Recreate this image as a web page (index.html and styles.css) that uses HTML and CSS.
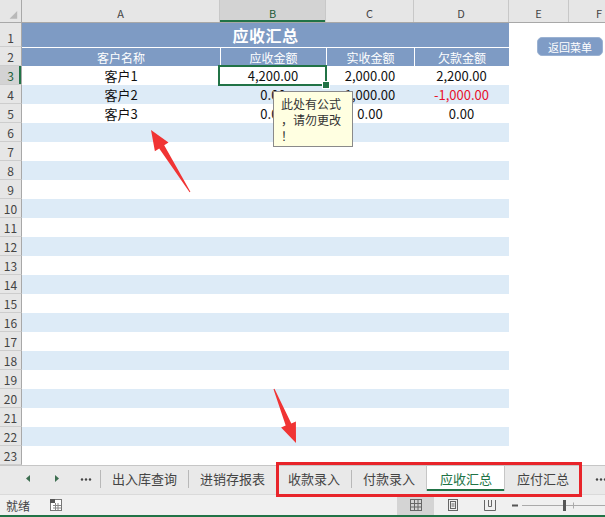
FILE: index.html
```html
<!DOCTYPE html>
<html lang="zh">
<head>
<meta charset="utf-8">
<title>应收汇总</title>
<link rel="stylesheet" href="styles.css">
</head>
<body>
<div class="app">
  <div class="sheet">
    <div class="row colhdr">
      <div class="corner"><svg width="22" height="22" viewBox="0 0 22 22"><polygon points="18,11 18,19 10,19" fill="#b9b9b9"/></svg></div>
      <div>A</div><div class="csel">B</div><div>C</div><div>D</div><div>E</div><div class="fcol">F</div>
    </div>
    <div class="row r1">
      <div class="rh">1</div>
      <div class="title">应收汇总</div>
      <div></div><div></div>
    </div>
    <div class="row">
      <div class="rh">2</div>
      <div class="hd">客户名称</div><div class="hd sep">应收金额</div><div class="hd sep">实收金额</div><div class="hd sep">欠款金额</div>
      <div></div><div></div>
    </div>
    <div class="row">
      <div class="rh rsel">3</div>
      <div class="c">客户1</div><div class="c sel">4,200.00</div><div class="c">2,000.00</div><div class="c">2,200.00</div>
      <div></div><div></div>
    </div>
    <div class="row alt">
      <div class="rh">4</div>
      <div class="c">客户2</div><div class="c">0.00</div><div class="c">1,000.00</div><div class="c neg">-1,000.00</div>
      <div></div><div></div>
    </div>
    <div class="row">
      <div class="rh">5</div>
      <div class="c">客户3</div><div class="c">0.00</div><div class="c">0.00</div><div class="c">0.00</div>
      <div></div><div></div>
    </div>
    <div class="row alt"><div class="rh">6</div><div class="band"></div><div></div><div></div></div>
    <div class="row"><div class="rh">7</div><div class="band"></div><div></div><div></div></div>
    <div class="row alt"><div class="rh">8</div><div class="band"></div><div></div><div></div></div>
    <div class="row"><div class="rh">9</div><div class="band"></div><div></div><div></div></div>
    <div class="row alt"><div class="rh">10</div><div class="band"></div><div></div><div></div></div>
    <div class="row"><div class="rh">11</div><div class="band"></div><div></div><div></div></div>
    <div class="row alt"><div class="rh">12</div><div class="band"></div><div></div><div></div></div>
    <div class="row"><div class="rh">13</div><div class="band"></div><div></div><div></div></div>
    <div class="row alt"><div class="rh">14</div><div class="band"></div><div></div><div></div></div>
    <div class="row"><div class="rh">15</div><div class="band"></div><div></div><div></div></div>
    <div class="row alt"><div class="rh">16</div><div class="band"></div><div></div><div></div></div>
    <div class="row"><div class="rh">17</div><div class="band"></div><div></div><div></div></div>
    <div class="row alt"><div class="rh">18</div><div class="band"></div><div></div><div></div></div>
    <div class="row"><div class="rh">19</div><div class="band"></div><div></div><div></div></div>
    <div class="row alt"><div class="rh">20</div><div class="band"></div><div></div><div></div></div>
    <div class="row"><div class="rh">21</div><div class="band"></div><div></div><div></div></div>
    <div class="row alt"><div class="rh">22</div><div class="band"></div><div></div><div></div></div>
    <div class="row"><div class="rh">23</div><div class="band"></div><div></div><div></div></div>

    <div class="comment">此处有公式<br>，请勿更改<br>！</div>
    <div class="menu-btn">返回菜单</div>
  </div>

  <div class="tabs">
    <div class="nav">
      <svg width="100" height="25" viewBox="0 0 100 25">
        <polygon points="30,9 30,16 26,12.5" fill="#3d6e50"/>
        <polygon points="55,9 55,16 59,12.5" fill="#3d6e50"/>
        <circle cx="82" cy="13.5" r="1.2" fill="#444"/>
        <circle cx="86" cy="13.5" r="1.2" fill="#444"/>
        <circle cx="90" cy="13.5" r="1.2" fill="#444"/>
      </svg>
    </div>
    <div class="tab">出入库查询</div>
    <div class="tab">进销存报表</div>
    <div class="tab">收款录入</div>
    <div class="tab">付款录入</div>
    <div class="tab active">应收汇总</div>
    <div class="tab">应付汇总</div>
    <div class="more">
      <svg width="20" height="25" viewBox="0 0 20 25">
        <circle cx="5" cy="13.5" r="1.2" fill="#444"/>
        <circle cx="9" cy="13.5" r="1.2" fill="#444"/>
        <circle cx="13" cy="13.5" r="1.2" fill="#444"/>
      </svg>
    </div>
  </div>

  <div class="status">
    <span class="ready">就绪</span>
    <svg class="macro" width="14" height="14" viewBox="0 0 14 14">
      <rect x="1.5" y="1.5" width="11" height="11" fill="#fff" stroke="#777"/>
      <rect x="1" y="1" width="5" height="4" fill="#555"/>
      <path d="M4 7.5h8M4 10h8M6.5 5v7M9 5v7" stroke="#888" stroke-width="1"/>
    </svg>
    <div class="spacer"></div>
    <div class="view on">
      <svg width="14" height="14" viewBox="0 0 14 14"><rect x="1.5" y="1.5" width="11" height="11" fill="none" stroke="#666"/><path d="M5.5 1.5v11M9 1.5v11M1.5 5.5h11M1.5 9h11" stroke="#666"/></svg>
    </div>
    <div class="view">
      <svg width="14" height="14" viewBox="0 0 14 14"><rect x="2.5" y="1.5" width="9" height="11" fill="none" stroke="#666"/><rect x="4.5" y="3.5" width="5" height="7" fill="none" stroke="#666"/><path d="M5.5 6h3M5.5 8h3" stroke="#666"/></svg>
    </div>
    <div class="view">
      <svg width="14" height="14" viewBox="0 0 14 14"><path d="M1.5 2v10.5h11V2M5.5 2v6.5h3V2" fill="none" stroke="#666"/></svg>
    </div>
    <svg class="zoom" width="95" height="14" viewBox="0 0 95 14">
      <path d="M2 7.5h6" stroke="#555" stroke-width="2"/>
      <path d="M12 7.5h83" stroke="#aaa" stroke-width="1"/>
      <rect x="53" y="2" width="3" height="11" fill="#555"/>
      <path d="M63.5 4.5v6" stroke="#aaa"/>
    </svg>
  </div>

  <div class="redbox"></div>
  <svg class="arrows" width="605" height="517" viewBox="0 0 605 517">
    <polygon points="190.4,191.7 164.2,145.3 168.5,142.6 151,130 154.9,151.2 159.2,148.5 189.6,192.3" fill="#f03434"/>
    <polygon points="274.5,388.8 291.3,423.4 295.9,421.5 296,443 281.1,427.5 285.7,425.6 273.5,389.2" fill="#f03434"/>
  </svg>
</div>
</body>
</html>
```

FILE: styles.css
```css
* { box-sizing: border-box; margin: 0; padding: 0; }

body {
  width: 605px;
  height: 517px;
  overflow: hidden;
  background: #fff;
  font-family: "Noto Sans CJK SC", "Noto Sans", sans-serif;
}

.app {
  position: relative;
  width: 605px;
  height: 517px;
  display: flex;
  flex-direction: column;
  overflow: hidden;
}

.sheet {
  position: relative;
  height: 465px;
  overflow: hidden;
  flex: none;
}

.row {
  display: grid;
  grid-template-columns: 22px 198px 106px 88px 95px 60px 62px;
  height: 19px;
  width: 631px;
}

.colhdr {
  height: 23px;
  background: #e6e6e6;
  border-bottom: 1px solid #a8a8a8;
}

.colhdr > div {
  border-right: 1px solid #c8c8c8;
  display: flex;
  align-items: center;
  justify-content: center;
  font-size: 11px;
  color: #444;
  padding-top: 4px;
}

.colhdr > .corner {
  padding: 0;
  border-right: 1px solid #a8a8a8;
  align-items: flex-start;
}

.colhdr > .csel {
  background: #d3d3d3;
  color: #1e5c3a;
  box-shadow: inset 0 -2px 0 #217346;
}

.colhdr > .fcol {
  justify-content: flex-start;
  padding-left: 27px;
}

.rh {
  background: #e6e6e6;
  border-right: 1px solid #a8a8a8;
  border-bottom: 1px solid #cdcdcd;
  font-size: 12px;
  color: #444;
  display: flex;
  align-items: flex-end;
  justify-content: center;
  line-height: 17px;
}

.rh.rsel {
  background: #d3d3d3;
  color: #1e5c3a;
  box-shadow: inset -2px 0 0 #217346;
}

.r1 { height: 24px; }

.title {
  grid-column: 2 / 6;
  background: #7e9bc4;
  color: #fff;
  font-size: 16px;
  font-weight: bold;
  display: flex;
  align-items: center;
  justify-content: center;
  letter-spacing: 0.5px;
}

.hd {
  background: #7e9bc4;
  border-top: 1px solid #fff;
  color: #fff;
  font-size: 12px;
  display: flex;
  align-items: center;
  justify-content: center;
}

.hd.sep { border-left: 1px solid #fff; }

.c {
  font-size: 13px;
  color: #111;
  display: flex;
  align-items: flex-end;
  justify-content: center;
  line-height: 18px;
}

.c.neg { color: #e8102c; }

.alt .c, .alt .band { background: #ddebf7; }

.band { grid-column: 2 / 6; }

.sel { position: relative; }

.sel::before {
  content: "";
  position: absolute;
  left: -2px;
  right: -1px;
  top: -1px;
  bottom: -1px;
  border: 2px solid #217346;
  z-index: 2;
}

.sel::after {
  content: "";
  position: absolute;
  right: -4px;
  bottom: -4px;
  width: 6px;
  height: 6px;
  background: #217346;
  border: 1px solid #fff;
  z-index: 3;
}

.comment {
  position: absolute;
  left: 273px;
  top: 91px;
  width: 80px;
  height: 56px;
  background: #ffffe1;
  border: 1px solid #8a8a8a;
  font-size: 12px;
  line-height: 16px;
  color: #333;
  padding: 4px 0 0 7px;
  z-index: 5;
}

.menu-btn {
  position: absolute;
  left: 537px;
  top: 37px;
  width: 66px;
  height: 19px;
  background: #7f9cc6;
  border: 1px solid #9bb2d2;
  border-radius: 5px;
  color: #fff;
  font-size: 11px;
  display: flex;
  align-items: center;
  justify-content: center;
  z-index: 4;
}

.tabs {
  flex: none;
  height: 29px;
  background: #e9e9e9;
  border-top: 1px solid #c6c6c6;
  display: flex;
  align-items: flex-start;
  font-size: 13px;
  color: #444;
  white-space: nowrap;
}

.nav { width: 100px; height: 25px; flex: none; }
.nav svg { display: block; }

.tab {
  position: relative;
  flex: none;
  height: 25px;
  padding: 0 11px;
  display: flex;
  align-items: center;
  border-left: 1px solid transparent;
}

.tab::before {
  content: "";
  position: absolute;
  left: -1px;
  top: 4px;
  bottom: 3px;
  width: 1px;
  background: #b8b8b8;
}

.tab.active {
  background: #fff;
  color: #217346;
  padding: 0 12px 0 13px;
  border-left: 1px solid #c6c6c6;
  border-right: 1px solid #c6c6c6;
  box-shadow: inset 0 -2px 0 #217346;
}

.tab.active::before,
.tab.active + .tab::before { display: none; }

.more { margin-left: 12px; height: 25px; flex: none; }
.more svg { display: block; }

.status {
  flex: 1;
  background: #f0f0f0;
  border-top: 1px solid #dadada;
  border-bottom: 2px solid #217346;
  display: flex;
  align-items: center;
  font-size: 12px;
  color: #444;
  white-space: nowrap;
}

.ready { margin-left: 6px; }
.macro { margin-left: 19px; display: block; flex: none; }
.spacer { flex: 1; }

.view {
  flex: none;
  width: 37px;
  height: 100%;
  display: flex;
  align-items: center;
  justify-content: center;
}

.view.on { background: #d4d4d4; }
.view svg { display: block; }

.zoom { display: block; margin-left: 2px; flex: none; }

.redbox {
  position: absolute;
  left: 276px;
  top: 462px;
  width: 306px;
  height: 35px;
  border: 3px solid #e8242a;
  z-index: 6;
  pointer-events: none;
}

.arrows {
  position: absolute;
  left: 0;
  top: 0;
  z-index: 7;
  pointer-events: none;
}
```
